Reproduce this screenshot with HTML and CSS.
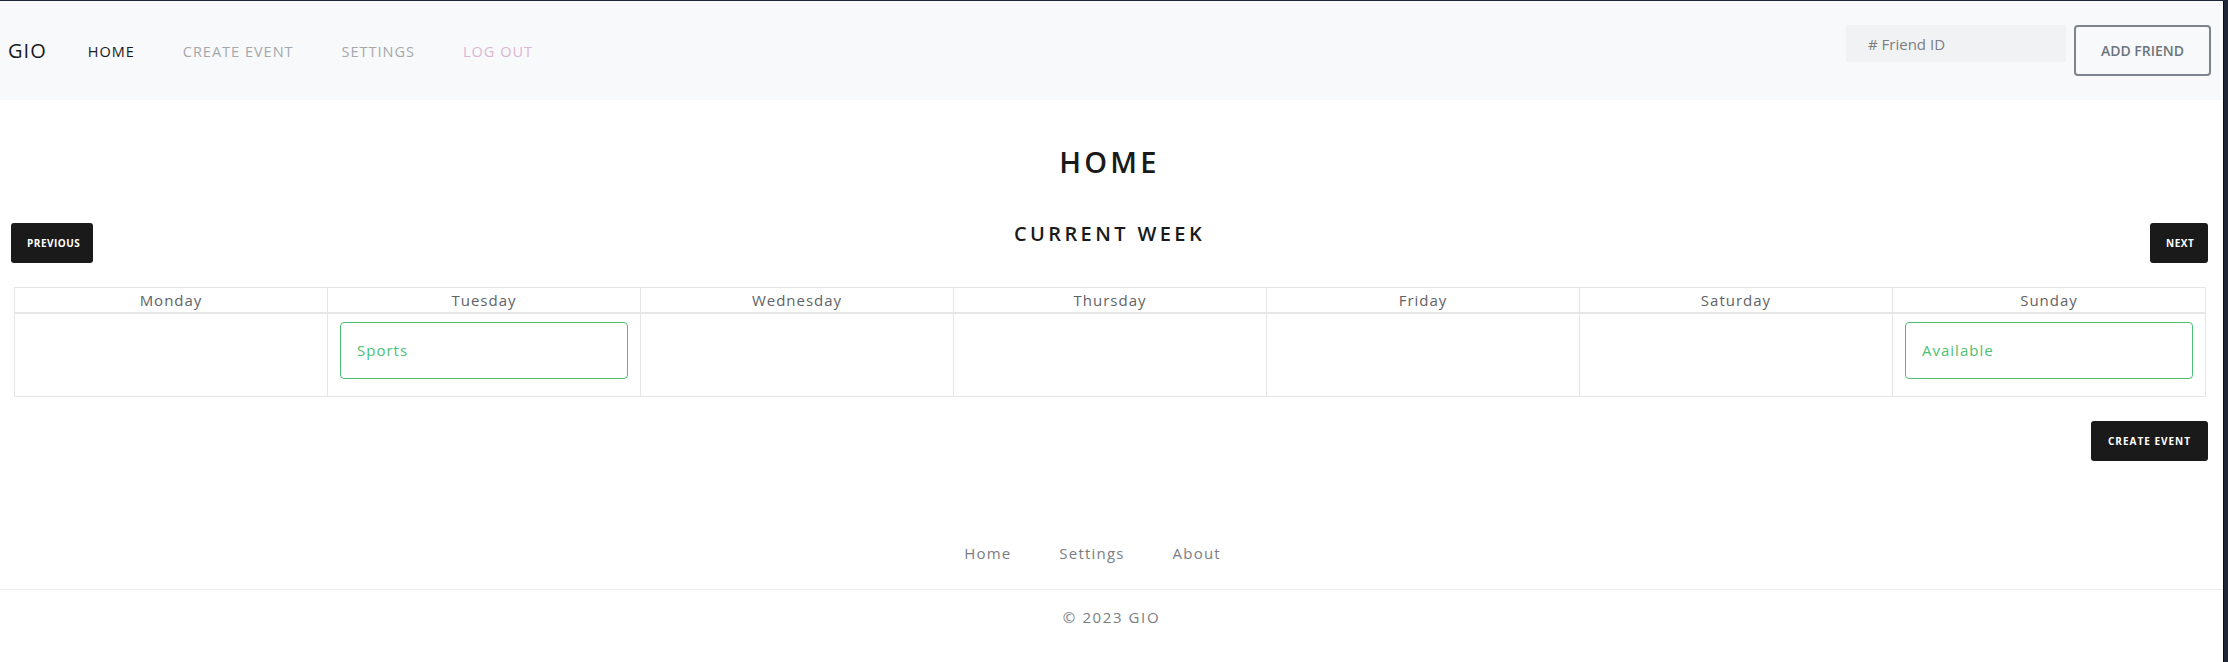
FILE: index.html
```html
<!DOCTYPE html>
<html lang="en">
<head>
  <meta charset="UTF-8" />
  <meta name="viewport" content="width=device-width, initial-scale=1.0"/>
  <title>GIO</title>
  <link rel="stylesheet" href="styles.css">
</head>
<body>

<div class="page">
  <nav class="navbar">
    <a class="brand" href="#">GIO</a>
    <ul class="nav-links">
      <li><a class="active" href="#">Home</a></li>
      <li><a href="#">Create Event</a></li>
      <li><a href="#">Settings</a></li>
      <li><a class="logout" href="#">Log Out</a></li>
    </ul>
    <form class="friend-form">
      <input type="text" placeholder="# Friend ID" />
      <button type="button" class="btn-outline">Add Friend</button>
    </form>
  </nav>

  <main>
    <h1>Home</h1>

    <div class="week-bar">
      <div class="week-left"><button class="btn-dark prev">Previous</button></div>
      <h3>Current Week</h3>
      <div class="week-right"><button class="btn-dark next">Next</button></div>
    </div>

    <table class="calendar">
      <thead>
        <tr>
          <th>Monday</th>
          <th>Tuesday</th>
          <th>Wednesday</th>
          <th>Thursday</th>
          <th>Friday</th>
          <th>Saturday</th>
          <th>Sunday</th>
        </tr>
      </thead>
      <tbody>
        <tr>
          <td></td>
          <td><div class="event">Sports</div></td>
          <td></td>
          <td></td>
          <td></td>
          <td></td>
          <td><div class="event">Available</div></td>
        </tr>
      </tbody>
    </table>

    <div class="actions">
      <button class="btn-dark">Create Event</button>
    </div>
  </main>

  <footer>
    <ul class="footer-links">
      <li><a href="#">Home</a></li>
      <li><a href="#">Settings</a></li>
      <li><a href="#">About</a></li>
    </ul>
    <p class="copy">© 2023 GIO</p>
  </footer>
</div>

</body>
</html>
```

FILE: styles.css
```css
* { box-sizing: border-box; }

html, body {
  margin: 0;
  height: 100%;
}

body {
  background: #1f2636;
  font-family: "Open Sans", Arial, sans-serif;
  color: #55595c;
  overflow: hidden;
}

a {
  text-decoration: none;
}

.page {
  background: #fff;
  margin: 1px 4px 0 0;
  height: calc(100% - 1px);
  border-right: 1px solid #0b0d12;
}

/* navbar */
.navbar {
  background: #f8f9fa;
  height: 99px;
  display: flex;
  align-items: center;
  padding: 0 12px 0 8px;
}

.brand {
  font-size: 20px;
  color: #1a1a1a;
  letter-spacing: 1px;
  margin-right: 41px;
}

.nav-links {
  list-style: none;
  display: flex;
  gap: 48px;
  margin: 0;
  padding: 0;
  flex: 1;
}

.nav-links a {
  font-size: 14.5px;
  text-transform: uppercase;
  letter-spacing: 1px;
  color: #a5a8ab;
}

.nav-links a.active {
  color: #1a1a1a;
}

.nav-links a.logout {
  color: #d9b6d6;
}

.friend-form {
  display: flex;
  align-self: flex-start;
  margin-top: 24px;
  gap: 8px;
}

.friend-form input {
  width: 220px;
  height: 37px;
  border: none;
  background: #f1f2f3;
  padding: 0 22px;
  font-family: "Open Sans", Arial, sans-serif;
  font-size: 15px;
  color: #55595c;
  outline: none;
}

.friend-form input::placeholder {
  color: #7a7e82;
}

.btn-outline {
  width: 137px;
  height: 51px;
  background: transparent;
  border: 2px solid #7d848b;
  border-radius: 4px;
  color: #6c757d;
  font-family: "Open Sans", Arial, sans-serif;
  font-size: 14px;
  font-weight: 600;
  text-transform: uppercase;
  padding: 0;
}

/* main */
main {
  padding: 0 15px 0 11px;
}

h1 {
  margin: 44px 0 0;
  text-align: center;
  font-size: 29px;
  line-height: 36px;
  font-weight: 600;
  letter-spacing: 3.2px;
  text-transform: uppercase;
  color: #1a1a1a;
}

.week-bar {
  display: grid;
  grid-template-columns: 1fr auto 1fr;
  align-items: start;
  margin-top: 43px;
}

.week-right {
  display: flex;
  justify-content: flex-end;
}

.week-bar h3 {
  margin: 0;
  font-size: 20px;
  line-height: 22px;
  font-weight: 600;
  letter-spacing: 3.4px;
  text-transform: uppercase;
  color: #1a1a1a;
}

.btn-dark {
  height: 40px;
  padding: 0 16px;
  background: #1a1a1a;
  color: #fff;
  border: none;
  border-radius: 3px;
  font-family: "Open Sans", Arial, sans-serif;
  font-size: 10px;
  font-weight: 700;
  letter-spacing: 0.5px;
  text-transform: uppercase;
}

.btn-dark.prev {
  width: 82px;
}

.btn-dark.next {
  width: 58px;
}

/* calendar */
.calendar {
  width: calc(100% - 5px);
  margin: 24px 0 0 3px;
  border-collapse: collapse;
  table-layout: fixed;
}

.calendar th,
.calendar td {
  border: 1px solid #e6e6e6;
}

.calendar th {
  height: 25px;
  padding: 0;
  font-weight: 400;
  font-size: 15px;
  letter-spacing: 1px;
  color: #5f6366;
  border-bottom-width: 2px;
}

.calendar td {
  height: 84px;
  padding: 8px 12px 10px 12px;
  vertical-align: top;
}

.event {
  height: 57px;
  border: 1px solid #4bbf73;
  border-radius: 4px;
  color: #4bbf73;
  font-size: 15px;
  letter-spacing: 1px;
  line-height: 55px;
  padding-left: 16px;
}

.actions {
  display: flex;
  justify-content: flex-end;
  margin-top: 24px;
}

.actions .btn-dark {
  width: 117px;
  letter-spacing: 1px;
}

/* footer */
footer {
  margin-top: 80px;
}

.footer-links {
  list-style: none;
  display: flex;
  justify-content: center;
  gap: 48px;
  margin: 0;
  padding: 0 38px 24px 0;
  border-bottom: 1px solid #ececec;
}

.footer-links a {
  font-size: 15px;
  line-height: 24px;
  letter-spacing: 1.2px;
  color: #7a7e82;
}

.copy {
  margin: 15px 0 0;
  text-align: center;
  font-size: 15px;
  line-height: 24px;
  letter-spacing: 1.6px;
  color: #7a7e82;
}
```
